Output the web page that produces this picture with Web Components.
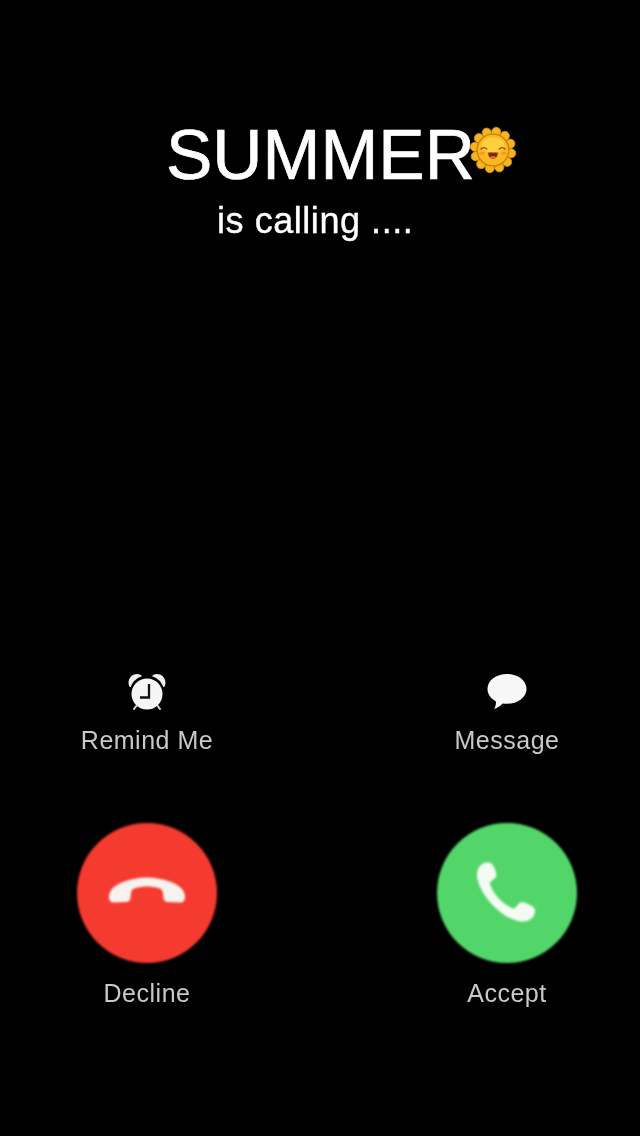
<!DOCTYPE html>
<html>
<head>
<meta charset="utf-8">
<title>Incoming call</title>
<style>
  html, body { margin: 0; background: #000; }
</style>
</head>
<body>
<call-screen>
  <call-header slot="header" name="SUMMER" status="is calling ...."></call-header>
  <call-action slot="actions" label="Remind Me" kind="icon">
    <svg width="40" height="40" viewBox="0 0 40 40">
      <path d="M2.300 16.500C-.2 11 3.500 4 10 4c2.200 0 4 .9 5 2.200C9.800 7.800 5.500 11.500 3.800 16.900c-.6.1-1.200 0-1.500-.4z" fill="#f0f0f0"/>
      <path d="M37.700 16.500C40.200 11 36.500 4 30 4c-2.200 0-4 .9-5 2.200 5.200 1.600 9.500 5.300 11.200 10.700.6.100 1.200 0 1.500-.4z" fill="#f0f0f0"/>
      <path d="M10 35l-3 4M30 35l3 4" stroke="#d8d8d8" stroke-width="2" stroke-linecap="round"/>
      <circle cx="20" cy="24" r="15.500" fill="#f5f5f5"/>
      <path d="M22 14v13.500H13" fill="none" stroke="#111" stroke-width="2.300"/>
    </svg>
  </call-action>
  <call-action slot="actions" label="Message" kind="icon">
    <svg width="44" height="40" viewBox="0 0 44 40">
      <path d="M22 4C10.900 4 2.500 10.500 2.500 19c0 5.400 3.400 9.800 8.500 12.400.1 2.900-.6 5.400-1.900 7.600 3.400-1 6.400-3 8.600-5.500 1.300.2 2.800.3 4.300.3 11.100 0 19.500-6.400 19.500-14.800S33.100 4 22 4z" fill="#f7f7f7"/>
    </svg>
  </call-action>
  <call-action slot="actions" label="Decline" kind="decline">
    <svg width="80" height="40" viewBox="0 0 80 40">
      <path d="M2 24C2 17 8 12 16 9 24 6 32 4.500 40 4.500S56 6 64 9c8 3 14 8 14 15 0 4-2 5.500-5 5.500l-12-.5c-3 0-4-1.500-4.500-4L56 20c-.5-3-2-4.500-5-5-4-1-7-1.500-11-1.500S33 14 29 15c-3 .5-4.500 2-5 5l-.5 5c-.5 2.500-1.500 4-4.500 4L7 29.500C4 29.500 2 28 2 24z" fill="#f8f2ee"/>
    </svg>
  </call-action>
  <call-action slot="actions" label="Accept" kind="accept">
    <svg width="80" height="80" viewBox="-2 -2 80 80">
      <path d="M12.500 9.500c3-2 6.500-2.500 9-1.500 2.200.9 3.800 4 5.200 8.500.8 2.800 1 5-.6 6.500l-3.900 3.200c-1.200 1-1.500 2.100-1 3.500 2.300 5.500 5 10 8.800 14 3.800 4 8 7 13.200 9.500 1.400.6 2.500.3 3.500-.9l3.300-3.700c1.600-1.600 3.600-1.600 6.400-.6 4.500 1.600 8.400 3.700 9.300 5.900 1 2.500-.2 6.500-3 9.400-3.200 3.200-8 3.900-13.500 2.700-8.500-1.900-16.800-6.800-24.500-14.700C16.500 42.700 11 33.500 8.600 24.700 7 18.500 8.500 12.300 12.500 9.500z" fill="#f4fbf2"/>
    </svg>
  </call-action>
</call-screen>

<script>
class CallScreen extends HTMLElement {
  constructor() {
    super();
    this.attachShadow({ mode: 'open' });
    this.shadowRoot.innerHTML = `
      <style>
        :host {
          display: block;
          width: 640px;
          height: 1136px;
          overflow: hidden;
          background: #000;
          font-family: "Liberation Sans", Arial, sans-serif;
        }
        .actions {
          display: grid;
          grid-template-columns: 180px 180px;
          column-gap: 180px;
          row-gap: 68px;
          padding: 425px 0 0 57px;
        }
      </style>
      <slot name="header"></slot>
      <div class="actions"><slot name="actions"></slot></div>
    `;
  }
}
customElements.define('call-screen', CallScreen);

class CallHeader extends HTMLElement {
  constructor() {
    super();
    this.attachShadow({ mode: 'open' });
  }

  connectedCallback() {
    this.shadowRoot.innerHTML = `
      <style>
        :host {
          display: block;
          padding: 116px 0 0 166px;
          color: #fff;
          filter: blur(0.4px);
        }
        .name {
          display: flex;
          align-items: center;
          height: 78px;
          font-size: 69.5px;
          line-height: 78px;
          -webkit-text-stroke: 0.7px #fff;
        }
        .status {
          margin-top: 5px;
          padding-left: 51px;
          font-size: 36px;
          line-height: 44px;
          letter-spacing: 0.55px;
          -webkit-text-stroke: 0.4px #fff;
        }
      </style>
      <div class="name"><span>${this.getAttribute('name')}</span><sun-face></sun-face></div>
      <div class="status">${this.getAttribute('status')}</div>
    `;
  }
}
customElements.define('call-header', CallHeader);

class SunFace extends HTMLElement {
  constructor() {
    super();
    this.attachShadow({ mode: 'open' });
    let petals = '';
    for (let i = 0; i < 12; i++) {
      petals += `<ellipse cx="25" cy="6" rx="4.800" ry="5" fill="#f5b420" stroke="#c98a12" stroke-width=".8" transform="rotate(${i * 30 + 10} 25 25)"/>`;
    }
    this.shadowRoot.innerHTML = `
      <style>
        :host { display: block; flex: none; width: 48px; height: 48px; margin: -10px 0 0 -6px; }
        svg { display: block; }
      </style>
      <svg width="48" height="48" viewBox="0 0 50 50">
        ${petals}
        <circle cx="25" cy="25" r="16.500" fill="#fbb91f" stroke="#c9800f" stroke-width="1.400"/>
        <ellipse cx="25" cy="20" rx="12" ry="8" fill="#fdcf3c"/>
        <path d="M12.500 24q3-3 6 0M31.500 24q3-3 6 0" fill="none" stroke="#8a4a10" stroke-width="1.300" stroke-linecap="round"/>
        <ellipse cx="13.500" cy="28.500" rx="3" ry="1.800" fill="#f59a2a"/>
        <ellipse cx="36.500" cy="28.500" rx="3" ry="1.800" fill="#f59a2a"/>
        <path d="M20 27.500h10c0 4.500-2.200 6.700-5 6.700s-5-2.200-5-6.700z" fill="#7a2c10"/>
        <path d="M21.500 32.500q3.500-2.200 7 0q-3.500 2.600-7 0z" fill="#f0705a"/>
      </svg>
    `;
  }
}
customElements.define('sun-face', SunFace);

class CallAction extends HTMLElement {
  constructor() {
    super();
    this.attachShadow({ mode: 'open' });
  }

  connectedCallback() {
    const kind = this.getAttribute('kind');
    this.shadowRoot.innerHTML = `
      <style>
        :host {
          display: flex;
          flex-direction: column;
          align-items: center;
          color: #c9c9c9;
          font-size: 25px;
          line-height: 30px;
        }
        .icon {
          display: flex;
          align-items: center;
          justify-content: center;
          height: 44px;
          margin-bottom: 13px;
          filter: blur(0.5px);
        }
        .round {
          width: 140px;
          height: 140px;
          margin-bottom: 15px;
          border-radius: 50%;
          filter: blur(0.8px);
        }
        .decline { background: #f53b30; }
        .accept { background: #52d66a; }
        .label { letter-spacing: 0.5px; filter: blur(0.3px); }
      </style>
      <div class="icon ${kind === 'icon' ? '' : 'round ' + kind}"><slot></slot></div>
      <div class="label">${this.getAttribute('label')}</div>
    `;
  }
}
customElements.define('call-action', CallAction);
</script>
</body>
</html>
